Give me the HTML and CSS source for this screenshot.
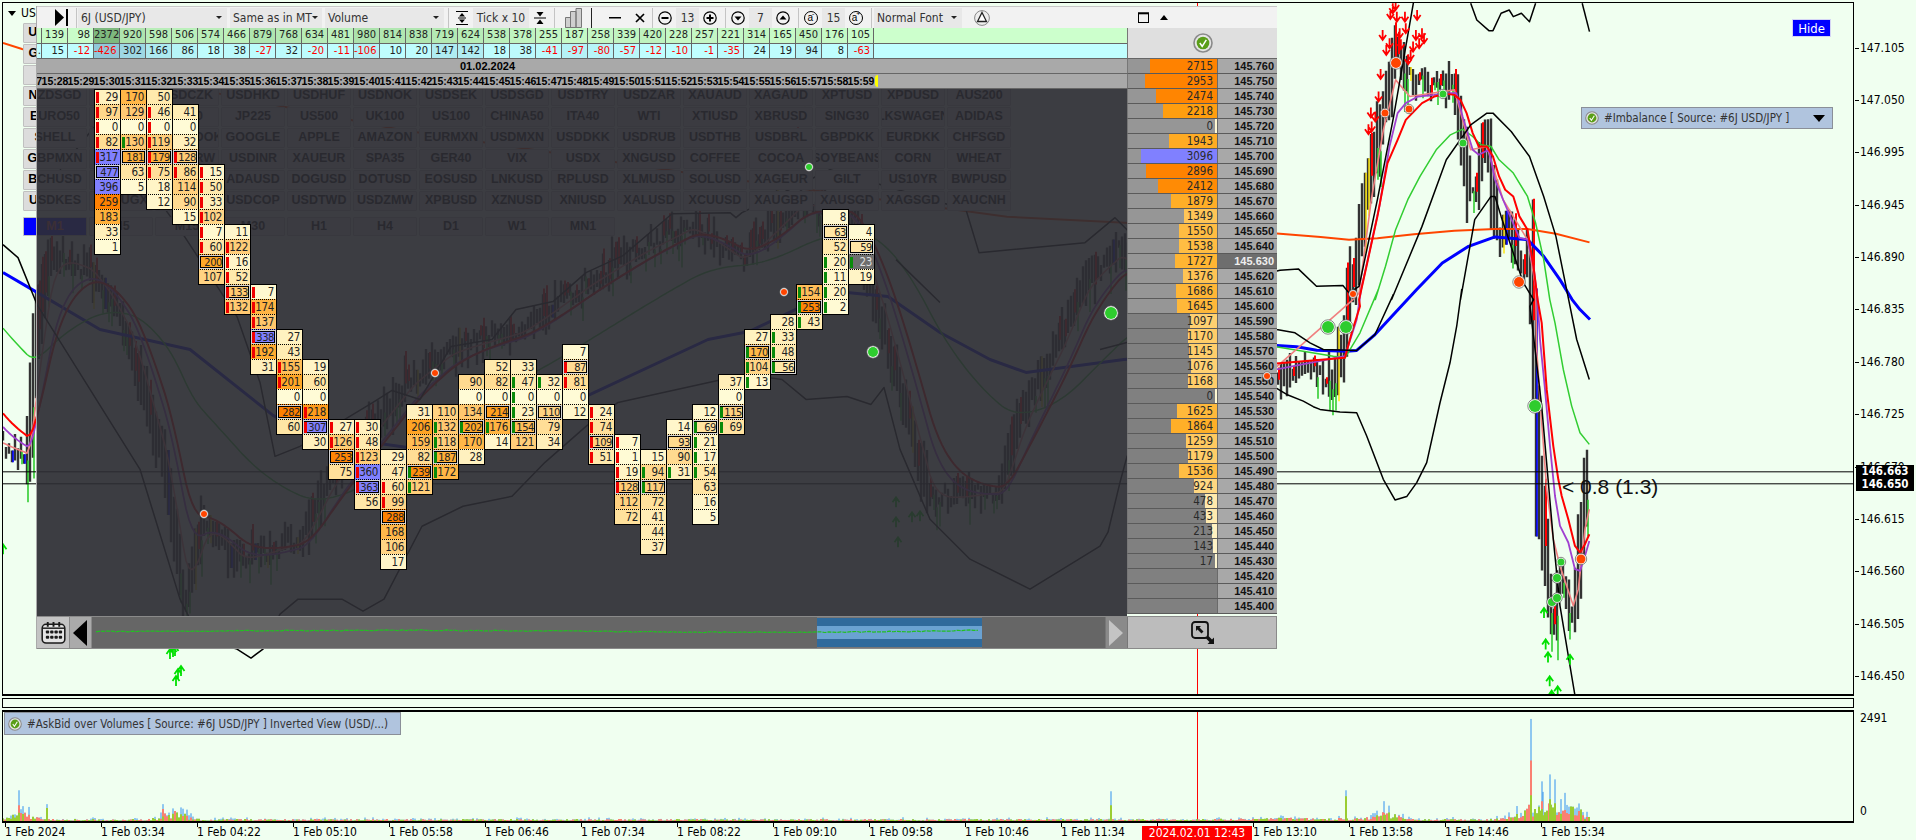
FILE: index.html
```html
<!DOCTYPE html>
<html lang="en">
<head>
<meta charset="utf-8">
<title>Footprint</title>
<link rel="stylesheet" href="styles.css">
</head>
<body>
<div class="terminal">
  <div class="row row-main">
    <div class="pane pane-main">
      <svg id="mainChart" class="fill" viewBox="3 3 1850 692" preserveAspectRatio="none"></svg>
      <div class="sym-label"><span class="sym-tri"></span><span>USDJPY,M1</span></div>
      <button class="hide-btn">Hide</button>
      <div class="legend legend-imb">
        <svg class="chk" viewBox="0 0 20 20"><use href="#check"/></svg>
        <span>#Imbalance [ Source: #6J USD/JPY ]</span>
        <span class="legend-tri"></span>
      </div>
    </div>
    <div class="axis axis-main" id="priceAxis">
      <div class="tag tag-a">146.663</div>
      <div class="tag tag-b">146.650</div>
    </div>
  </div>
  <div class="row row-sep"><div class="pane pane-sep"></div></div>
  <div class="row row-sub">
    <div class="pane pane-sub">
      <svg id="subChart" class="fill" viewBox="3 711 1850 110" preserveAspectRatio="none"></svg>
      <div class="legend legend-ask">
        <svg class="chk" viewBox="0 0 20 20"><use href="#check"/></svg>
        <span>#AskBid over Volumes [ Source: #6J USD/JPY ] Inverted View (USD/...)</span>
      </div>
    </div>
    <div class="axis axis-sub"><span>2491</span><span>0</span></div>
  </div>
  <div class="time-axis" id="timeAxis"><div class="time-tag">2024.02.01 12:43</div></div>

  <div class="symbols" id="symbols"></div>

  <div class="panel">
    <div class="toolbar">
      <div class="tg tg-play">
        <svg class="ic-play" viewBox="0 0 13 17"><path d="M0 0 L9 8.5 L0 17Z"/><rect x="11" y="0" width="2" height="17"/></svg>
      </div>
      <div class="tg tg-sel">
        <div class="sel sel-a"><span>6J (USD/JPY)</span><i class="caret"></i></div>
        <div class="sel sel-b"><span>Same as in MT</span><i class="caret"></i></div>
        <div class="sel sel-c"><span>Volume</span><i class="caret"></i></div>
      </div>
      <div class="tg tg-tick">
        <svg class="ic" viewBox="0 0 14 14"><path d="M1 .5H13M1 13.5H13M3 7H11" stroke="#000" fill="none"/><path d="M7 2L10 5.5H4ZM7 12L4 8.5H10Z"/></svg>
        <div class="box box-tick">Tick x 10</div>
        <svg class="ic" viewBox="0 0 14 14"><path d="M1 7H13" stroke="#000" fill="none"/><path d="M7 5.5L3.500 1H10.500ZM7 8.500L10.500 13H3.500Z"/></svg>
      </div>
      <div class="tg tg-bars">
        <svg class="ic-bars" viewBox="0 0 17 20"><path d="M.5 19.500V9.500H5.500V19.500M5.500 19.500V3.500H11V19.500M11 19.500V.5H16.500V19.500H.5Z" fill="#cfcfcf" stroke="#777"/></svg>
      </div>
      <div class="tg tg-win">
        <svg class="ic-dash" viewBox="0 0 12 2"><rect width="12" height="1.500"/></svg>
        <svg class="ic-x" viewBox="0 0 10 10"><path d="M1 1L9 9M9 1L1 9" stroke="#000" stroke-width="1.700"/></svg>
      </div>
      <div class="tg tg-num">
        <svg class="circ" viewBox="0 0 14 14"><circle cx="7" cy="7" r="6.200" fill="none" stroke="#000" stroke-width="1.200"/><path d="M3.500 7H10.500" stroke="#000" stroke-width="2"/></svg>
        <div class="box">13</div>
        <svg class="circ" viewBox="0 0 14 14"><circle cx="7" cy="7" r="6.200" fill="none" stroke="#000" stroke-width="1.200"/><path d="M3.500 7H10.500M7 3.500V10.500" stroke="#000" stroke-width="2"/></svg>
      </div>
      <div class="tg tg-num">
        <svg class="circ" viewBox="0 0 14 14"><circle cx="7" cy="7" r="6.200" fill="none" stroke="#000" stroke-width="1.200"/><path d="M3.500 5.500H10.500L7 9.500Z"/></svg>
        <div class="box">7</div>
        <svg class="circ" viewBox="0 0 14 14"><circle cx="7" cy="7" r="6.200" fill="none" stroke="#000" stroke-width="1.200"/><path d="M3.500 8.500H10.500L7 4.500Z"/></svg>
      </div>
      <div class="tg tg-num">
        <span class="circ-a">a<sup>-</sup></span>
        <div class="box">15</div>
        <span class="circ-a">a<sup>+</sup></span>
      </div>
      <div class="tg tg-font">
        <div class="sel sel-d"><span>Normal Font</span><i class="caret"></i></div>
        <svg class="ic-tri" viewBox="0 0 16 18"><circle cx="8" cy="9" r="7.400" fill="#eee" stroke="#888"/><path d="M8 3.500L12.500 12.500H3.500Z" fill="#fff" stroke="#222" stroke-width="1.300"/></svg>
        <svg class="ic-restore" viewBox="0 0 11 11"><rect x=".5" y="1" width="10" height="9.500" fill="none" stroke="#000"/><rect x="0" y=".5" width="11" height="1.800"/></svg>
        <i class="caret-up"></i>
      </div>
    </div>

    <div class="panel-mid">
      <div class="flow">
        <div class="stats" id="stats"></div>
        <div class="date-row"><span>01.02.2024</span></div>
        <div class="time-row" id="timeRow"></div>
        <div class="fp" id="footprint"></div>
      </div>
      <div class="ladder">
        <div class="status"><svg class="chk-big" viewBox="0 0 20 20"><use href="#check"/></svg></div>
        <div id="ladderRows"></div>
      </div>
    </div>

    <div class="scrollbar">
      <div class="btn-cal">
        <svg class="ic-cal" viewBox="0 0 26 24"><rect x="1.200" y="3.500" width="23.600" height="19.500" rx="4" fill="#e4e4e4" stroke="#1a1a1a" stroke-width="1.600"/><path d="M1.500 7.500H24.500" stroke="#1a1a1a" stroke-width="1.500"/><path d="M7 1V6M13 1V6M19 1V6" stroke="#1a1a1a" stroke-width="2"/><g fill="#1a1a1a"><rect x="5" y="10" width="3.500" height="3" rx="1"/><rect x="9.500" y="10" width="3.500" height="3" rx="1"/><rect x="14" y="10" width="3.500" height="3" rx="1"/><rect x="18.500" y="10" width="3.500" height="3" rx="1"/><rect x="5" y="15.500" width="3.500" height="3" rx="1"/><rect x="9.500" y="15.500" width="3.500" height="3" rx="1"/><rect x="14" y="15.500" width="3.500" height="3" rx="1"/><rect x="18.500" y="15.500" width="3.500" height="3" rx="1"/></g></svg>
      </div>
      <div class="btn-prev"><i class="tri-left"></i></div>
      <div class="track">
        <div class="thumb"></div>
        <svg id="miniLine" class="fill" viewBox="0 0 1013 33" preserveAspectRatio="none"></svg>
      </div>
      <div class="btn-next"><i class="tri-right"></i></div>
      <div class="btn-size">
        <svg class="ic-size" viewBox="0 0 24 24"><rect x="1" y="1" width="16" height="16" rx="3" fill="none" stroke="#111" stroke-width="1.800"/><path d="M5 5H10L8.500 6.500L12.500 10.500L10.500 12.500L6.500 8.500L5 10Z" fill="#111"/><path d="M23 23H16.500L18.500 21L15 17.500L17.500 15L21 18.500L23 16.500Z" fill="#111"/></svg>
      </div>
    </div>
  </div>

  <svg id="markers" class="overlay" viewBox="0 0 1916 840"></svg>
  <div class="note">&lt; 0.8 (1.3)</div>
</div>

<svg class="defs" width="0" height="0">
  <defs>
    <g id="check">
      <circle cx="10" cy="10" r="9" fill="#e6e6e6" stroke="#8a8a8a" stroke-width="1.600"/>
      <circle cx="10" cy="10" r="6.300" fill="#5a9e18"/>
      <path d="M6.800 10L9.200 13.300L13.300 6.800" fill="none" stroke="#fff" stroke-width="1.500"/>
    </g>
  </defs>
</svg>
<script src="app.js"></script>
</body>
</html>
```
FILE: styles.css
```css
* { box-sizing: border-box; }
html, body { margin: 0; padding: 0; width: 1916px; height: 840px; overflow: hidden; background: #f0fff0; }
body { font-family: "DejaVu Sans Condensed", "DejaVu Sans", "Liberation Sans", sans-serif; font-size: 12px; color: #000; }
svg { display: block; }
.defs { position: absolute; }
.terminal { position: relative; width: 1916px; height: 840px; padding-top: 2px; display: flex; flex-direction: column; }
.row { display: flex; }
.row-main { height: 694px; }
.row-sep { height: 14px; padding-top: 2px; }
.row-sub { height: 112px; }
.pane { position: relative; flex: 0 0 1852px; margin-left: 2px; border: 1px solid #000; overflow: hidden; }
.pane-main { border-bottom-width: 2px; }
.pane-sep { height: 10px; border-top: 1px solid #000; }
.pane-sub { border-top-width: 2px; }
.fill { position: absolute; left: 0; top: 0; width: 100%; height: 100%; }
.overlay { position: absolute; left: 0; top: 0; width: 1916px; height: 840px; pointer-events: none; }

.sym-label { position: absolute; left: 5px; top: 3px; display: flex; align-items: center; gap: 5px; white-space: nowrap; }
.sym-tri { width: 0; height: 0; border-left: 4px solid transparent; border-right: 4px solid transparent; border-top: 5px solid #000; }
.hide-btn { position: absolute; left: 1789px; top: 16px; width: 39px; height: 18px; padding: 0; background: #0000ff; border: 1px solid #d5d5f5; color: #fff; font: 13px "DejaVu Sans Condensed", "DejaVu Sans", sans-serif; }
.legend { position: absolute; display: flex; align-items: center; gap: 5px; background: #b0c4de; border: 1px solid #8a8f98; color: #333; font-size: 11.500px; padding-left: 3px; white-space: nowrap; }
.legend-imb { left: 1578px; top: 104px; width: 252px; height: 22px; }
.legend-ask { left: 1px; top: 0; width: 397px; height: 23px; margin-top: 0; }
.legend .chk { width: 14px; height: 14px; flex: none; }
.legend-tri { margin-left: auto; margin-right: 7px; width: 0; height: 0; border-left: 6px solid transparent; border-right: 6px solid transparent; border-top: 7px solid #000; }

.axis { flex: 1; position: relative; padding-left: 6px; }
.axis-main { display: flex; flex-direction: column; padding-top: 19.500px; }
.axis-lab { height: 52.360px; flex: none; display: flex; align-items: center; position: relative; }
.axis-lab::before { content: ""; position: absolute; left: -5px; top: 50%; width: 4px; height: 1px; background: #000; }
.axis-sub { display: flex; flex-direction: column; justify-content: space-between; padding: 1px 0 0 6px; height: 112px; }
.axis-sub span { height: 16px; }
.axis-sub span:last-child { margin-bottom: 2px; }
.tag { position: absolute; left: 2px; width: 58px; height: 13px; background: #000; color: #fff; font-weight: bold; font-size: 11.500px; line-height: 13px; text-align: center; }
.tag-a { top: 463px; }
.tag-b { top: 476px; }

.time-axis { height: 18px; display: flex; position: relative; padding-left: 3px; border-top: 1px solid #000; margin-right: 62px; margin-left: 2px; }
.time-cell { flex: 0 0 96px; min-width: 0; position: relative; line-height: 18px; white-space: nowrap; }
.time-cell::before { content: ""; position: absolute; left: 0; top: 0; width: 1px; height: 4px; background: #000; }
.time-tag { position: absolute; left: 1140px; top: 3px; width: 110px; height: 15px; background: #ff0000; color: #fff; line-height: 15px; text-align: center; z-index: 2; }

.symbols { position: absolute; left: 23px; top: 23px; display: grid; grid-template-columns: repeat(15, 64px); grid-auto-rows: 19.500px; gap: 1.500px 2px; }
.sb { background: #dcdcdc; border: 1px solid #c0c0c0; border-radius: 1px; font: bold 12.500px "Liberation Sans", sans-serif; line-height: 17px; text-align: center; overflow: hidden; white-space: nowrap; color: #000; display: flex; justify-content: center; }
.sb.tf { margin-top: 5px; height: 19px; }
.sb.on { background: #0000ff; color: #e05050; }

.panel { position: absolute; left: 36px; top: 6px; width: 1241px; height: 643px; border-left: 1px solid #aaa; display: flex; flex-direction: column; }
.toolbar { height: 22px; flex: none; background: #f2f2f2; display: flex; align-items: center; border-top: 1px solid #c8c8c8; font-size: 12px; color: #333; }
.tg { height: 20px; display: flex; align-items: center; flex: none; }
.tg + .tg { border-left: 1px solid #c4c4c4; }
.tg-play { width: 39px; justify-content: flex-end; padding-right: 8px; }
.ic-play { width: 13px; height: 17px; }
.tg-sel { width: 372px; padding-left: 1px; gap: 3px; }
.sel { height: 20px; background: #e8e8e8; display: flex; align-items: center; justify-content: space-between; padding: 0 5px 0 3px; white-space: nowrap; }
.sel-a { width: 149px; }
.sel-b { width: 92px; }
.sel-c { width: 119px; }
.sel-d { width: 88px; }
.caret { width: 0; height: 0; border-left: 3px solid transparent; border-right: 3px solid transparent; border-top: 3px solid #222; }
.tg-tick { width: 106px; padding-left: 6px; gap: 4px; }
.ic { width: 14px; height: 14px; flex: none; }
.box { width: 23px; height: 20px; background: #e8e8e8; display: flex; align-items: center; justify-content: center; white-space: nowrap; }
.box-tick { width: 56px; }
.tg-bars { width: 37px; justify-content: center; }
.ic-bars { width: 17px; height: 20px; }
.tg-win { width: 61px; padding-left: 17px; gap: 14px; }
.tg-bars + .tg-win { border-left: 1px solid #222; }
.ic-dash { width: 12px; height: 2px; }
.ic-x { width: 10px; height: 10px; }
.tg-num { width: 73px; padding-left: 5px; gap: 4px; }
.circ { width: 14px; height: 14px; flex: none; }
.circ-a { width: 14px; height: 14px; flex: none; border: 1.200px solid #000; border-radius: 50%; font: 10px/11px "Liberation Sans", sans-serif; color: #000; text-align: center; white-space: nowrap; }
.circ-a sup { font-size: 7px; line-height: 0; margin-left: -1px; }
.tg-font { flex: 1; padding-left: 2px; }
.ic-tri { width: 16px; height: 18px; margin-left: 12px; flex: none; }
.ic-restore { width: 11px; height: 11px; margin-left: 148px; flex: none; }
.caret-up { margin-left: 11px; width: 0; height: 0; border-left: 4px solid transparent; border-right: 4px solid transparent; border-bottom: 5px solid #000; }

.panel-mid { display: flex; height: 588px; flex: none; }
.flow { flex: 0 0 1090px; display: flex; flex-direction: column; min-width: 0; }
.stats { height: 31px; display: flex; flex-direction: column; border-bottom: 1px solid #666; background: #a9a9a9; }
.stat-row { height: 15px; display: flex; }
.stat-row.s1 { height: 16px; background: #ccffcc; border-bottom: 1px solid #666; }
.stat-row.s2 { background: #c0ffff; height: 14px; }
.st { flex: 0 0 26px; min-width: 0; border-right: 1px solid #666; padding-right: 3px; text-align: right; font-size: 11px; line-height: 14px; overflow: hidden; color: #222; white-space: nowrap; }
.st.lead { flex-basis: 5px; padding: 0; }
.st.neg { color: #f00; }
.date-row { height: 15px; background: #a9a9a9; padding-left: 423px; border-bottom: 1px solid #666; font: bold 11px/14px "Liberation Sans", sans-serif; }
.time-row { height: 15px; background: #a9a9a9; display: flex; overflow: hidden; border-bottom: 1px solid #666; font: bold 10.500px/14px "Liberation Sans", sans-serif; }
.tl { flex: 0 0 26px; min-width: 0; display: flex; justify-content: center; white-space: nowrap; }
.tl.lead { flex-basis: 5px; justify-content: flex-end; }
.time-row::after { content: ""; flex: none; width: 3px; height: 12px; margin-top: 1px; margin-left: 1px; background: #ffff00; border-radius: 3px 0 0 3px; }

.fp { flex: 1; background: rgba(44, 44, 51, .92); display: grid; grid-template-columns: repeat(32, 26px); grid-auto-rows: 15px; padding-left: 5px; align-content: start; }
.cell { height: 16px; width: 27px; margin-bottom: -1px; border: 1px solid #000; border-top-style: dotted; border-bottom-style: dotted; display: flex; align-items: center; padding: 0 2px 0 1px; color: #222; font-size: 11.500px; letter-spacing: -.3px; line-height: 13px; }
.cell.first { border-top-style: solid; }
.cell.last { border-bottom-style: solid; }
.cell .v { margin-left: auto; }
.mk { width: 3px; height: 11px; flex: none; }
.mk.r { background: #f00000; }
.mk.g { background: #0a8a0a; }
.cell.boxed { box-shadow: inset 0 0 0 1px #d4d4d4, inset 0 0 0 2px #000; font-size: 11px; letter-spacing: -.4px; padding: 0 2px 0 1px; }
.cell.cur { background: #6e6e6e !important; color: #ddd; }

.ladder { flex: 0 0 150px; display: flex; flex-direction: column; }
.status { height: 31px; background: #dfdfdf; display: flex; align-items: center; justify-content: center; border-left: 1px solid #777; border-bottom: 1px solid #666; }
.chk-big { width: 20px; height: 20px; }
.lr { height: 15px; display: flex; border-bottom: 1px solid #5a5a5a; border-left: 1px solid #777; }
.vol { flex: 0 0 90px; background-color: #969696; background-repeat: no-repeat; background-position: right top; background-size: var(--w) 100%; background-image: linear-gradient(var(--c), var(--c)); border-right: 1px solid #6a6a6a; text-align: right; padding-right: 4px; font-size: 11.500px; line-height: 14px; color: #2a2a2a; }
.lr.low .vol { background-color: #808080; }
.px { flex: 1; background: #a8a8a8; text-align: right; padding-right: 3px; font: bold 11px/14px "Liberation Sans", sans-serif; color: #111; }
.px.cur { background: #6e6e6e; color: #eee; }

.scrollbar { height: 33px; flex: none; display: flex; border: 1px solid #8a8a8a; border-left: 0; }
.btn-cal { flex: 0 0 33px; background: #c4c4c4; border-right: 1px solid #8a8a8a; display: flex; align-items: center; justify-content: center; }
.ic-cal { width: 25px; height: 23px; }
.btn-prev { flex: 0 0 22px; background: #aaa; display: flex; align-items: center; padding-left: 3px; border-right: 1px solid #8a8a8a; }
.tri-left { width: 0; height: 0; border-top: 13px solid transparent; border-bottom: 13px solid transparent; border-right: 14px solid #000; }
.track { position: relative; flex: 0 0 1013px; background: #666; }
.thumb { position: absolute; left: 725px; top: 0; width: 165px; height: 31px; background: linear-gradient(#2f6a9c 0 8px, #6aa2d2 8px 21px, #2f6a9c 21px); border-top: 1px solid #777; border-bottom: 1px solid #777; }
.btn-next { flex: 0 0 22px; background: #8a8a8a; display: flex; align-items: center; padding-left: 3px; border-left: 1px solid #777; }
.tri-right { width: 0; height: 0; border-top: 13px solid transparent; border-bottom: 13px solid transparent; border-left: 14px solid #c4c4c4; }
.btn-size { flex: 1; background: #bcbcbc; border-left: 1px solid #777; display: flex; align-items: center; justify-content: center; }
.ic-size { width: 24px; height: 24px; margin-left: 1px; }

.note { position: absolute; left: 1562px; top: 475px; font: 21px/24px "Liberation Sans", sans-serif; color: #111; white-space: nowrap; pointer-events: none; }
```
FILE: app.js
```js
(function () {
  var seed = 12345;
  function rnd() { seed = (seed * 1664525 + 1013904223) >>> 0; return seed / 4294967296; }
  function el(id) { return document.getElementById(id); }

  /* ---------- footprint ---------- */
  var columns = [
    [2, '29r 97r 0r 82r 317r 477b 396 259 183 33 1'],
    [2, '170 129 0 130g 181b 63 5'],
    [2, '50 46r 0r 119r 179rb 75r 18 12'],
    [3, '41 0 32 128rb 86r 114 90 15'],
    [7, '15r 50r 33r 102r 7r 60r 200b 107'],
    [11, '11 122r 16r 52r 133rb 132r'],
    [15, '7r 174r 137r 338rb 192r 31'],
    [18, '27 43 155r 201r 0 282b 60'],
    [20, '19 60 0 218r 307rb 30'],
    [24, '27r 126r 253b 75'],
    [24, '30r 48r 123r 360r 363rb 56'],
    [26, '29 47 60r 99r 288b 168 106 17'],
    [23, '31 206 159 82 239gb 121g'],
    [23, '110 132g 118g 187gb 172g'],
    [21, '90 0 134 202gb 170 28'],
    [20, '52 82 0 214b 176g 14'],
    [20, '33 47g 0g 23g 154gb 121'],
    [21, '32g 0 110b 79 34'],
    [19, '7 87rb 81r 0 12'],
    [23, '24r 74r 109rb 51r'],
    [25, '7r 1r 19r 128rb 112 72'],
    [26, '15 94g 117gb 72 41 44 37'],
    [24, '14 93b 90 31g'],
    [23, '12 69gb 21g 17g 54g 63 16 5'],
    [21, '37 0 115gb 69g'],
    [18, '27 170gb 104g 13g'],
    [17, '28 33g 48g 56gb'],
    [15, '154g 253gb 43g'],
    [10, '8 63b 52 20g 11g 20g 2g'],
    [11, '4 59b 23gc 19']
  ];
  function mix(stops, v) {
    for (var i = 1; i < stops.length; i++) {
      if (v <= stops[i][0]) {
        var a = stops[i - 1], b = stops[i], t = (v - a[0]) / (b[0] - a[0]);
        return 'rgb(' + [1, 2, 3].map(function (k) { return Math.round(a[k] + (b[k] - a[k]) * t); }).join(',') + ')';
      }
    }
    var l = stops[stops.length - 1];
    return 'rgb(' + l[1] + ',' + l[2] + ',' + l[3] + ')';
  }
  var cellStops = [[0, 255, 251, 214], [60, 255, 230, 165], [130, 255, 202, 115], [200, 255, 168, 40], [260, 255, 128, 0]];
  var fpHtml = '';
  columns.forEach(function (col, c) {
    var items = col[1].split(' ');
    items.forEach(function (tok, i) {
      var m = /^(\d+)([a-z]*)$/.exec(tok), v = +m[1], f = m[2];
      var cls = 'cell';
      if (i === 0) cls += ' first';
      if (i === items.length - 1) cls += ' last';
      if (f.indexOf('b') >= 0) cls += ' boxed';
      if (f.indexOf('c') >= 0) cls += ' cur';
      var bg = v > 300 ? '#8080ff' : mix(cellStops, v);
      var mk = f.indexOf('r') >= 0 ? '<i class="mk r"></i>' : f.indexOf('g') >= 0 ? '<i class="mk g"></i>' : '';
      fpHtml += '<div class="' + cls + '" style="grid-column:' + (c + 3) + ';grid-row:' + (col[0] + i - 1) + ';background:' + bg + '">' + mk + '<span class="v">' + v + '</span></div>';
    });
  });
  el('footprint').innerHTML = fpHtml;

  /* ---------- stats + time header ---------- */
  var vols = [139, 98, 2372, 920, 598, 506, 574, 466, 879, 768, 634, 481, 980, 814, 838, 719, 624, 538, 378, 255, 187, 258, 339, 420, 228, 257, 221, 314, 165, 450, 176, 105];
  var delta = [15, -12, -426, 302, 166, 86, 18, 38, -27, 32, -20, -11, -106, 10, 20, 147, 142, 18, 38, -41, -97, -80, -57, -12, -10, -1, -35, 24, 19, 94, 8, -63];
  var s1 = '<div class="st lead"></div>', s2 = '<div class="st lead">.</div>', tr = '<div class="tl lead">7</div>';
  vols.forEach(function (v, i) {
    var t = v / 2372, r = Math.round(204 - 78 * t), g = Math.round(255 - 70 * t);
    s1 += '<div class="st" style="background:rgb(' + r + ',' + g + ',' + r + ')">' + v + '</div>';
    var d = delta[i], u = Math.abs(d) / 426;
    s2 += '<div class="st' + (d < 0 ? ' neg' : '') + '" style="background:rgb(' + Math.round(192 - 48 * u) + ',' + Math.round(255 - 55 * u) + ',' + Math.round(255 - 38 * u) + ')">' + d + '</div>';
    tr += '<div class="tl">15:' + (28 + i) + '</div>';
  });
  el('stats').innerHTML = '<div class="stat-row s1">' + s1 + '</div><div class="stat-row s2">' + s2 + '</div>';
  el('timeRow').innerHTML = tr;

  /* ---------- ladder ---------- */
  var ladder = [2715, 2953, 2474, 2218, 0, 1943, 3096, 2896, 2412, 1879, 1349, 1550, 1538, 1727, 1376, 1686, 1645, 1097, 1170, 1145, 1076, 1168, 0, 1625, 1864, 1259, 1179, 1536, 924, 478, 433, 213, 143, 17, '', '', ''];
  var volStops = [[0, 255, 248, 210], [500, 255, 232, 170], [1100, 255, 208, 112], [1650, 255, 184, 56], [2200, 255, 160, 16], [2500, 255, 130, 0]];
  var lh = '';
  ladder.forEach(function (v, i) {
    var price = (145.76 - i * 0.01).toFixed(3);
    var blank = v === '';
    var w = blank ? 0 : Math.max(2, Math.round(v * 0.0245));
    var c = v === '' ? 'transparent' : v >= 3000 ? '#8080ff' : mix(volStops, v);
    lh += '<div class="lr' + (i >= 17 ? ' low' : '') + '"><div class="vol" style="--w:' + w + 'px;--c:' + c + '">' + v + '</div><div class="px' + (i === 13 ? ' cur' : '') + '">' + price + '</div></div>';
  });
  el('ladderRows').innerHTML = lh;

  /* ---------- symbol buttons ---------- */
  var rows = [
    'USDCAD USDCHF USDJPY EURUSD GBPUSD AUDUSD NZDUSD EURGBP EURJPY EURCHF EURAUD EURCAD EURNZD GBPJPY GBPCHF',
    'GBPAUD GBPCAD GBPNZD AUDJPY AUDCHF AUDCAD AUDNZD NZDJPY NZDCHF NZDCAD CADJPY CADCHF CHFJPY XAUUSD XAGUSD',
    '',
    'NZDSGD USDCNH USDCZK USDHKD USDHUF USDNOK USDSEK USDSGD USDTRY USDZAR XAUAUD XAGAUD XPTUSD XPDUSD AUS200',
    'EURO50 FRA40 HK50 JP225 US500 UK100 US100 CHINA50 ITA40 WTI XTIUSD XBRUSD SING30 LKSWAGEN ADIDAS',
    'SHELL NETFLIX FACEBOOK GOOGLE APPLE AMAZON EURMXN USDMXN USDDKK USDRUB USDTHB USDBRL GBPDKK EURDKK CHFSGD',
    'GBPMXN GBPSGD USDKRW USDINR XAUEUR SPA35 GER40 VIX USDX XNGUSD COFFEE COCOA SOYBEANS CORN WHEAT',
    'BCHUSD BTCUSD ETHUSD ADAUSD DOGUSD DOTUSD EOSUSD LNKUSD RPLUSD XLMUSD SOLUSD XAGEUR GILT US10YR BWPUSD',
    'USDKES USDUGX USDPLN USDCOP USDTWD USDZMW XPBUSD XZNUSD XNIUSD XALUSD XCUUSD XAUGBP XAUSGD XAGSGD XAUCNH'
  ];
  var sh = '';
  rows.forEach(function (r) {
    var list = r ? r.split(' ') : new Array(15).join(' ').split(' ');
    list.forEach(function (s) { sh += '<div class="sb">' + s + '</div>'; });
  });
  ['M1', 'M5', 'M15', 'M30', 'H1', 'H4', 'D1', 'W1', 'MN1'].forEach(function (t, i) {
    sh += '<div class="sb tf' + (i === 0 ? ' on' : '') + '">' + t + '</div>';
  });
  el('symbols').innerHTML = sh;

  /* ---------- axes ---------- */
  var ax = '';
  ['147.105', '147.050', '146.995', '146.945', '146.890', '146.835', '146.780', '146.725', '146.670', '146.615', '146.560', '146.505', '146.450'].forEach(function (p) {
    ax += '<div class="axis-lab">' + p + '</div>';
  });
  el('priceAxis').insertAdjacentHTML('afterbegin', ax);
  var tx = '';
  ['1 Feb 2024', '1 Feb 03:34', '1 Feb 04:22', '1 Feb 05:10', '1 Feb 05:58', '1 Feb 06:46', '1 Feb 07:34', '1 Feb 08:22', '1 Feb 09:10', '1 Feb 09:58', '1 Feb 10:46', '1 Feb 11:34', '1 Feb 12:22', '1 Feb 13:10', '1 Feb 13:58', '1 Feb 14:46', '1 Feb 15:34'].forEach(function (t) {
    tx += '<div class="time-cell">' + t + '</div>';
  });
  el('timeAxis').insertAdjacentHTML('afterbegin', tx);

  /* ---------- coordinates helpers ---------- */
  function z7(a) { var o = []; for (var i = 0; i < a.length; i += 2) o.push([1280 + a[i] / 2.465, a[i + 1] / 3]); return o; }
  function z12(a) { var o = []; for (var i = 0; i < a.length; i += 2) o.push([1260 + a[i] / 3, 290 + a[i + 1] / 3]); return o; }
  function pairs(a) { var o = []; for (var i = 0; i < a.length; i += 2) o.push([a[i], a[i + 1]]); return o; }
  function pts(p) { return p.map(function (q) { return q[0].toFixed(1) + ',' + q[1].toFixed(1); }).join(' '); }
  function line(p, color, w) { return '<polyline points="' + pts(p) + '" fill="none" stroke="' + color + '" stroke-width="' + w + '" stroke-linejoin="round"/>'; }

  /* price path used for candles and for averages under the panel */
  var center = pairs([3, 445, 28, 455, 36, 340, 50, 250, 90, 270, 110, 300, 130, 340, 165, 470, 185, 600, 205, 520, 240, 560, 300, 540, 330, 480, 370, 430, 410, 380, 450, 350, 520, 330, 590, 280, 640, 250, 690, 225, 740, 260, 800, 200, 850, 215, 885, 330, 930, 500, 1000, 490, 1020, 420, 1060, 340, 1085, 280, 1120, 250, 1180, 340, 1277, 378, 1300, 362, 1320, 375, 1335, 378, 1345, 345, 1348, 300, 1357, 267, 1363, 213, 1371, 173, 1379, 137, 1390, 87, 1396, 53, 1406, 80, 1418, 80, 1430, 87, 1442, 87, 1454, 80, 1462, 133, 1470, 187, 1477, 187, 1487, 127, 1493, 193, 1501, 243, 1507, 217, 1515, 250, 1521, 267, 1527, 260, 1533, 300, 1535, 390, 1540, 490, 1547, 567, 1553, 620, 1560, 583, 1567, 590, 1573, 623, 1580, 557, 1588, 473]);
  function cy(x) {
    for (var i = 1; i < center.length; i++) {
      if (x <= center[i][0]) {
        var a = center[i - 1], b = center[i];
        return a[1] + (b[1] - a[1]) * (x - a[0]) / (b[0] - a[0]);
      }
    }
    return center[center.length - 1][1];
  }
  function ema(alpha, off, start) {
    var o = [], v = start;
    for (var x = 3; x < 1272; x += 3) { v += (cy(x) - v) * alpha; o.push([x, v + off]); }
    return o;
  }

  /* candles */
  var dark = '', green = '', red = '', yellow = '', blue = '';
  for (var x = 3; x < 1590; x += 3) {
    var c = cy(x) + (rnd() - .5) * 18, slope = Math.abs(cy(x + 3) - cy(x - 3));
    var h = 3 + rnd() * rnd() * 22 + slope * .7;
    dark += 'M' + x + ' ' + (c - h).toFixed(1) + 'V' + (c + h).toFixed(1);
    var q = rnd(), xw = x + 1;
    if (q < .2) green += 'M' + xw + ' ' + (c + h * .3).toFixed(1) + 'V' + (c + h + 4 + rnd() * 18).toFixed(1);
    else if (q < .42) red += 'M' + xw + ' ' + (c - h - rnd() * 8).toFixed(1) + 'V' + (c + h * .2).toFixed(1);
    else if (q < .45) yellow += 'M' + xw + ' ' + (c - h).toFixed(1) + 'V' + (c + h + 6).toFixed(1);
    else if (q < .47) blue += 'M' + xw + ' ' + (c - h).toFixed(1) + 'V' + (c + h).toFixed(1);
  }
  var m = '';
  /* moving averages */
  m += line(ema(.11, 0, 410).concat(z12([255, 205, 275, 130, 300, 50])).concat(z7([195, 900, 215, 790, 240, 650, 265, 490, 290, 420, 310, 360, 350, 310, 380, 290, 410, 282, 430, 285, 445, 300, 460, 340, 475, 400, 490, 440, 510, 440, 525, 470, 540, 530, 555, 570, 575, 590, 590, 650, 610, 690, 625, 800, 635, 900])).concat(z12([845, 100, 860, 300, 880, 470, 895, 570, 905, 620, 925, 690, 945, 770, 960, 790, 975, 765, 988, 735])), '#ff0000', 2);
  var purple = ema(.14, 4, 420).concat(z12([255, 200, 290, 90])).concat(z7([200, 870, 220, 760, 245, 620, 270, 440, 290, 340, 310, 310, 340, 290, 380, 285, 410, 280, 435, 280, 450, 350, 475, 450, 490, 465, 515, 450, 530, 540, 550, 600, 590, 715, 610, 720, 625, 800, 635, 900])).concat(z12([840, 150, 855, 300, 870, 470, 885, 620, 900, 710, 925, 760, 945, 840, 960, 845, 975, 800, 988, 755]));
  var salmon = ema(.3, 2, 440).concat(z7([180, 900, 195, 880, 225, 600, 255, 390, 285, 240, 320, 290, 430, 270, 470, 450, 510, 440, 550, 600, 610, 720, 630, 860])).concat(z12([830, 180, 845, 400, 860, 600, 880, 750, 900, 830, 940, 950, 955, 900, 975, 720, 988, 660]));
  var thinGreen = ema(.03, 0, 325).concat(z12([220, 200, 255, 205, 300, 130, 355, 0])).concat(z7([235, 900, 260, 800, 285, 690, 315, 600, 345, 530, 385, 450, 420, 405, 450, 388, 475, 410, 495, 435, 520, 440, 540, 480, 575, 520, 610, 590, 630, 670, 650, 780, 665, 900])).concat(z12([885, 100, 910, 240, 935, 350, 960, 430, 988, 465]));
  var thickBlue = pairs([3, 273, 34, 291, 100, 330, 190, 350, 273, 416, 300, 430, 350, 440, 406, 448, 500, 430, 586, 397, 708, 340, 749, 332, 810, 303, 847, 293, 888, 297, 940, 333, 990, 360, 1026, 373, 1124, 360]).concat(z12([50, 168, 110, 172, 170, 182, 260, 185, 290, 183, 345, 135, 470, 0])).concat(z7([400, 790, 465, 740, 530, 712, 610, 720, 650, 770, 690, 840, 720, 900])).concat(z12([960, 60, 990, 90]));
  var orange = pairs([3, 43, 22, 49, 150, 80, 400, 130, 700, 175, 1007, 217, 1125, 223]).concat(z7([0, 702, 100, 712, 170, 720, 240, 716, 330, 704, 430, 693, 530, 688, 610, 688, 680, 702, 763, 728]));

  var bandA = pairs([3, 245, 18, 258, 37, 305, 90, 390, 140, 470, 180, 600, 200, 640, 237, 650, 251, 659, 263, 650, 280, 615, 298, 600, 342, 600, 363, 612, 384, 600, 422, 527, 463, 507, 512, 497, 545, 463, 586, 427, 618, 403, 745, 375, 782, 380, 806, 400, 847, 397, 871, 405, 884, 388, 900, 450, 930, 520, 970, 560, 1030, 590, 1100, 547, 1108, 533, 1120, 483, 1127, 457, 1180, 400]).concat(z12([50, 297, 80, 315, 130, 335, 160, 352, 180, 360, 240, 368, 290, 370, 320, 440, 370, 570, 405, 632, 440, 622, 470, 580, 500, 520, 540, 340, 570, 220, 590, 110, 605, 0])).concat(z7([445, 900, 480, 660, 520, 590, 530, 590, 545, 650, 575, 760, 600, 850, 625, 900])).concat(z12([810, 50, 845, 350, 880, 750, 900, 950, 925, 1100, 945, 1220]));
  var bandB = pairs([60, 170, 100, 120, 180, 230, 237, 317, 260, 383, 275, 457, 300, 447, 373, 403, 392, 391, 420, 400, 451, 347, 492, 340, 516, 310, 553, 302, 586, 273, 623, 256, 672, 214, 730, 213, 736, 218, 742, 213, 830, 170, 966, 210, 979, 253, 1085, 243, 1115, 218, 1127, 230, 1200, 300]).concat(z12([50, 120, 105, 130, 150, 160, 190, 180, 290, 183, 345, 135, 400, 15])).concat(z7([275, 900, 350, 680, 410, 480, 470, 375, 510, 340, 525, 340, 570, 395, 615, 470, 650, 590, 680, 710, 710, 890])).concat(z12([950, 150, 988, 270]));
  var bandC = pairs([1100, 350, 1127, 343, 1200, 290]).concat(z7([0, 812, 45, 808, 90, 860, 155, 858, 170, 880, 195, 860, 240, 600, 280, 350, 330, 0]));
  var bandD = z7([470, 10, 485, 60, 515, 92, 525, 92, 545, 40, 565, 30, 575, 50, 595, 40, 615, 65, 630, 10]);
  var bandE = z7([745, 10, 763, 95]);
  var bandF = pairs([896, 260, 940, 303]);

  var chart = '';
  chart += '<line x1="1197.5" y1="0" x2="1197.5" y2="700" stroke="#ff0000"/>';
  chart += '<path d="' + dark + '" stroke="#333" stroke-width="2.4" fill="none"/>';
  chart += '<path d="' + green + '" stroke="#32cd32" stroke-width="1.6" fill="none"/>';
  chart += '<path d="' + red + '" stroke="#ff0000" stroke-width="2" fill="none"/>';
  chart += '<path d="' + yellow + '" stroke="#ffe600" stroke-width="1.4" fill="none"/>';
  chart += '<path d="' + blue + '" stroke="#0000ff" stroke-width="1.6" fill="none"/>';
  chart += line(thickBlue, '#0000ff', 3);
  chart += line(orange, '#ff4500', 2);
  chart += line(thinGreen, '#32cd32', 1.5);
  chart += line(salmon, '#f08080', 1.6);
  chart += line(purple, '#a040d0', 1.8);
  chart += m;
  [bandA, bandB, bandC, bandD, bandE, bandF].forEach(function (b) { chart += line(b, '#000', 1.5); });
  chart += '<line x1="2" y1="472.5" x2="1856" y2="472.5" stroke="#000"/>';
  chart += '<line x1="2" y1="484.5" x2="1856" y2="484.5" stroke="#000"/>';

  /* arrows */
  var dn = z7([285, 15, 278, 25, 272, 42, 288, 50, 308, 50, 338, 45, 253, 105, 310, 85, 295, 100, 335, 105, 350, 100, 355, 115, 270, 130, 298, 133, 343, 130, 328, 140, 262, 150, 322, 165, 316, 178, 248, 222, 243, 290, 224, 338, 235, 350, 226, 380, 218, 388]).concat(pairs([805, 100, 798, 122]));
  var up = z12([852, 972, 857, 1066, 864, 1105, 930, 1112, 869, 1177, 893, 1207, 875, 1220]).concat(pairs([173, 653, 178, 675, 181, 672, 176, 682, 170, 655, 175, 652, 896, 503, 896, 523, 912, 518, 920, 517, 898, 543, 3, 550]));
  var dnD = '', upD = '';
  dn.forEach(function (p) { var a = p[0], b = p[1]; dnD += 'M' + a + ' ' + (b - 5) + 'V' + (b + 4) + 'M' + (a - 3.5) + ' ' + b + 'L' + a + ' ' + (b + 5) + 'L' + (a + 3.5) + ' ' + b; });
  up.forEach(function (p) { var a = p[0], b = p[1]; upD += 'M' + a + ' ' + (b + 5) + 'V' + (b - 4) + 'M' + (a - 3.5) + ' ' + b + 'L' + a + ' ' + (b - 5) + 'L' + (a + 3.5) + ' ' + b; });
  chart += '<path d="' + dnD + '" fill="none" stroke="#ff0000" stroke-width="1.8"/>';
  chart += '<path d="' + upD + '" fill="none" stroke="#00e000" stroke-width="1.8"/>';
  el('mainChart').innerHTML = chart;

  /* markers over the panel */
  var gc = '#2ecc2e', oc = '#ff4500';
  var marks = [[1328, 327, 6, gc], [1346, 327, 6, gc], [1535, 406, 6, gc], [1561, 562, 3.5, gc], [1557, 578, 4, gc], [1552, 602, 4, gc], [1557, 598, 4, gc], [1581, 559, 4.5, oc], [1267, 376, 3, oc], [1353, 294, 3, oc], [1396, 63, 5, oc], [1385, 113, 3.5, oc], [1409, 109, 3.5, oc], [1443, 94, 3.5, gc], [1463, 143, 3.5, gc], [1519, 282, 5, oc], [435, 373, 3, oc], [784, 292, 3, oc], [873, 352, 5, gc], [809, 167, 3, gc], [1111, 313, 6, gc], [204, 514, 3, oc]];
  var mh = '';
  marks.forEach(function (k) {
    mh += '<circle cx="' + k[0] + '" cy="' + k[1] + '" r="' + (k[2] + 1.2) + '" fill="#fff" stroke="#555" stroke-width=".7"/><circle cx="' + k[0] + '" cy="' + k[1] + '" r="' + k[2] + '" fill="' + k[3] + '"/>';
  });
  el('markers').innerHTML = mh;

  /* volume sub-chart */
  function bump(x, cx, w, a) { var d = (x - cx) / w; return a * Math.exp(-d * d); }
  var sal = '', grn = '', blu = '', base = 821;
  for (var vx = 3; vx < 1590; vx += 2) {
    var e = 1.4 + bump(vx, 22, 14, 5) + bump(vx, 175, 16, 6) + bump(vx, 1385, 16, 5) + bump(vx, 1545, 26, 15) + bump(vx, 1578, 12, 5) + bump(vx, 1300, 70, 1);
    var a = e * (.3 + rnd() * 1.1), top = a + (rnd() < .3 ? e * rnd() * 1.6 : 0);
    blu += 'M' + vx + ' ' + base + 'V' + (base - top).toFixed(1);
    var green1 = vx > 1535 && vx < 1562 ? rnd() < .75 : vx > 1562 ? rnd() < .25 : rnd() < .5;
    if (green1) grn += 'M' + vx + ' ' + base + 'V' + (base - a).toFixed(1);
    else sal += 'M' + vx + ' ' + base + 'V' + (base - a).toFixed(1);
  }
  var spikes = [[19, 31, 16, 8], [47, 17, 4, 13], [163, 17, 12, 4], [1111, 30, 3, 16], [1346, 31, 3, 25], [1531, 103, 61, 26], [1384, 20, 8, 6], [1550, 47, 10, 22], [1555, 42, 14, 18], [1542, 40, 20, 12]];
  spikes.forEach(function (s) {
    blu += 'M' + s[0] + ' ' + base + 'V' + (base - s[1]);
    sal += 'M' + s[0] + ' ' + base + 'V' + (base - s[2]);
    grn += 'M' + s[0] + ' ' + base + 'V' + (base - s[3]);
  });
  el('subChart').innerHTML =
    '<line x1="1197.5" y1="710" x2="1197.5" y2="822" stroke="#ff0000"/>' +
    '<path d="' + blu + '" stroke="#2e90f0" stroke-width="1" fill="none"/>' +
    '<path d="' + sal + '" stroke="#fa8072" stroke-width="2" fill="none"/>' +
    '<path d="' + grn + '" stroke="#9acd32" stroke-width="2" fill="none"/>';

  /* minimap line */
  var mini = [];
  for (var i = 0; i < 220; i++) { var tt = i / 220; mini.push([4 + 886 * tt, 15.5 - 3 * Math.sin(tt * 5.5 + .6) * tt - tt * 2 + (rnd() - .5)]); }
  el('miniLine').innerHTML = '<polyline points="' + pts(mini) + '" fill="none" stroke="#22c022" stroke-width="1.3" stroke-dasharray="4 1"/>';
})();
```
